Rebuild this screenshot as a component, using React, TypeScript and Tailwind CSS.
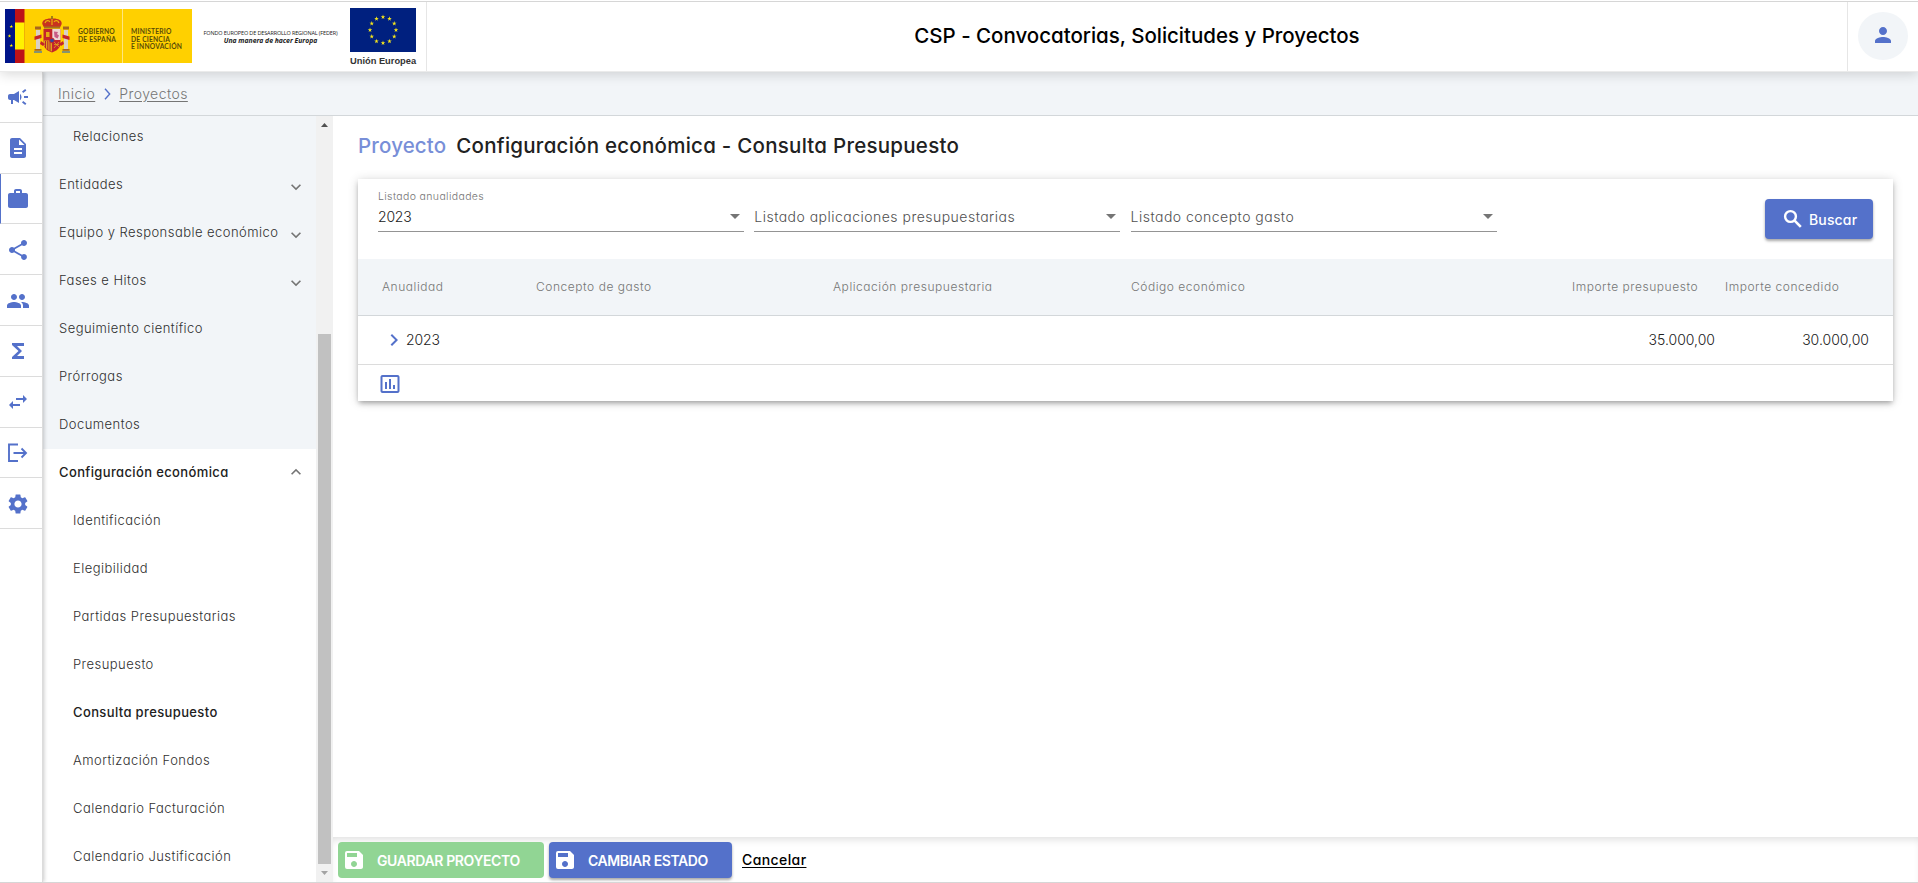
import React from 'react';
import {
  MdCampaign,
  MdDescription,
  MdWork,
  MdShare,
  MdPeople,
  MdFunctions,
  MdSwapHoriz,
  MdSettings,
  MdPerson,
  MdSave,
  MdInsertChartOutlined,
  MdExpandMore,
  MdExpandLess,
  MdChevronRight,
} from 'react-icons/md';

function ExitIcon() {
  return (
    <svg viewBox="0 0 24 24" width="24" height="24" fill="none" stroke="currentColor" strokeWidth="1.900">
      <path d="M12 3.500H3v16.500h9M7.500 12h12.500M15.500 7.500l4.500 4.500-4.500 4.500" />
    </svg>
  );
}

function SearchIcon() {
  return (
    <svg viewBox="0 0 24 24" width="24" height="24" fill="none" stroke="currentColor" className="mr-[4px]">
      <circle cx="9.500" cy="9.500" r="5.400" strokeWidth="2.400" />
      <path d="M13.600 13.600l6.200 6.200" strokeWidth="2.600" />
    </svg>
  );
}

const rail = [
  { id: 'conv', icon: <MdCampaign size={24} /> },
  { id: 'sol', icon: <MdDescription size={24} /> },
  { id: 'pro', icon: <MdWork size={24} />, active: true },
  { id: 'share', icon: <MdShare size={24} /> },
  { id: 'people', icon: <MdPeople size={24} /> },
  { id: 'sum', icon: <MdFunctions size={24} /> },
  { id: 'swap', icon: <MdSwapHoriz size={24} /> },
  { id: 'exit', icon: <ExitIcon /> },
  { id: 'conf', icon: <MdSettings size={24} /> },
];

type MenuItem = { label: string; child?: boolean; arrow?: 'down' | 'up'; bold?: boolean; white?: boolean };

const menu: MenuItem[] = [
  { label: 'Relaciones', child: true },
  { label: 'Entidades', arrow: 'down' },
  { label: 'Equipo y Responsable económico', arrow: 'down' },
  { label: 'Fases e Hitos', arrow: 'down' },
  { label: 'Seguimiento científico' },
  { label: 'Prórrogas' },
  { label: 'Documentos' },
  { label: 'Configuración económica', arrow: 'up', bold: true, white: true },
  { label: 'Identificación', child: true, white: true },
  { label: 'Elegibilidad', child: true, white: true },
  { label: 'Partidas Presupuestarias', child: true, white: true },
  { label: 'Presupuesto', child: true, white: true },
  { label: 'Consulta presupuesto', child: true, bold: true, white: true },
  { label: 'Amortización Fondos', child: true, white: true },
  { label: 'Calendario Facturación', child: true, white: true },
  { label: 'Calendario Justificación', child: true, white: true },
];

const STAR = '0,-1 0.224,-0.309 0.951,-0.309 0.363,0.118 0.588,0.809 0,0.382 -0.588,0.809 -0.363,0.118 -0.951,-0.309 -0.224,-0.309';

function EuFlag() {
  return (
    <svg viewBox="0 0 66 44" width="66" height="44">
      <rect width="66" height="44" fill="#00207f" />
      {Array.from({ length: 12 }, (_, i) => {
        const a = (i * Math.PI) / 6;
        return (
          <polygon
            key={i}
            points={STAR}
            fill="#f5e51b"
            transform={`translate(${33 + 13 * Math.sin(a)} ${22 - 13 * Math.cos(a)}) scale(2.4)`}
          />
        );
      })}
    </svg>
  );
}

function CoatOfArms() {
  return (
    <svg viewBox="0 0 38 38" width="38" height="38">
      <path d="M9.500 8.500C8 4 14 2 19 2.500c5-.5 11 1.500 9.500 6l-1.500 3H11z" fill="#c8321e" />
      <path d="M12 7c1-3 4-3 5-1M21 6c1-2 4-2 5 1M19 3v6" stroke="#e9b10c" strokeWidth="1.200" fill="none" />
      <path d="M18.200 0h1.600v3h-1.600z" fill="#8a6a1c" />
      <path d="M11 10.500h16v2H11z" fill="#a5711f" />
      <path d="M10.500 13h17v14c0 5-4 8-8.500 9.500C14.500 35 10.500 32 10.500 27z" fill="#c4242b" />
      <path d="M19.300 13h8.200v11h-8.200z" fill="#eed6d4" />
      <path d="M21 15.500l4 .5-1 2 2 1.500-1.500 3-3-1.500z" fill="#c75b86" />
      <path d="M13 16h3.500v5H13z" fill="#e6ac13" />
      <path d="M10.500 24.500h8.500v11c-4.500-1.500-8.500-4-8.500-9z" fill="#e0a21d" />
      <path d="M12.500 25v7M14.800 25v9M17 25v10" stroke="#b8242b" strokeWidth="1" />
      <path d="M21 26l5 5M26 26l-5 6M21 28.500h5" stroke="#e0a21d" strokeWidth=".8" />
      <circle cx="19" cy="24.500" r="2.300" fill="#34479c" stroke="#c4242b" />
      <path d="M3 14h4v20H3zM31 14h4v20h-4z" fill="#d9d0c4" />
      <path d="M2 10.500h6v3H2zM30 10.500h6v3h-6z" fill="#a8661f" />
      <path d="M1.500 20.500l7-2v3.500l-7 2zM36.500 20.500l-7-2v3.500l7 2zM8 25l4 3-2 2-3-2zM30 25l-4 3 2 2 3-2z" fill="#c4242b" />
      <path d="M1.500 33h7v1.800h-7zM29.500 33h7v1.800h-7z" fill="#a8661f" />
      <path d="M1 36h8M29 36h8" stroke="#5f8095" strokeWidth="1.600" />
    </svg>
  );
}

function GovLogo() {
  return (
    <div className="flex h-[54px] w-[187px] bg-[#ffd000] font-['Lato',sans-serif] text-[6.700px] leading-[7.600px] font-bold tracking-[0.200px] text-[#5a4c08]">
      <svg viewBox="0 0 20 54" width="20" height="54" className="shrink-0">
        <rect width="10" height="54" fill="#001489" />
        <rect x="10" width="9.500" height="54" fill="#bd1218" />
        <rect x="10" y="13.500" width="9.500" height="27" fill="#fff200" />
        <polygon points={STAR} fill="#fff200" transform="translate(6.3 17.5) scale(1.9)" />
        <polygon points={STAR} fill="#fff200" transform="translate(4.500 27) scale(1.9)" />
        <polygon points={STAR} fill="#fff200" transform="translate(6.3 36.500) scale(1.9)" />
      </svg>
      <div className="ml-[8px] mt-[7px] w-[38px] shrink-0">
        <CoatOfArms />
      </div>
      <div className="ml-[7px] mt-[19px] w-[44px] shrink-0 whitespace-nowrap">
        GOBIERNO
        <br />
        DE ESPAÑA
      </div>
      <div className="h-full w-px shrink-0 bg-[#ffe680]" />
      <div className="ml-[8px] mt-[19px] whitespace-nowrap">
        MINISTERIO
        <br />
        DE CIENCIA
        <br />
        E INNOVACIÓN
      </div>
    </div>
  );
}

function SelectField({ label, value, placeholder }: { label?: string; value?: string; placeholder?: string }) {
  return (
    <div className="flex h-[53px] w-[366px] flex-col border-b border-[#949494]">
      <div className="mt-[10px] h-[16px] text-[10.500px] leading-[16px] tracking-[0.370px] text-[#757575]">{label}</div>
      <div className="flex h-[23px] items-center justify-between pr-[4px]">
        <span
          className={
            value ? 'text-[14px] tracking-[-0.200px] text-[#212121]' : 'text-[14px] tracking-[0.480px] text-[#4f4f4f]'
          }
        >
          {value ?? placeholder}
        </span>
        <svg width="10" height="5" viewBox="0 0 10 5">
          <path d="M0 0h10L5 5z" fill="#757575" />
        </svg>
      </div>
    </div>
  );
}

export default function App() {
  return (
    <div className="flex h-[883px] w-[1918px] flex-col overflow-hidden border-b border-[#d6d6d6] bg-white font-['Inter',sans-serif] font-light text-[#212121] [font-feature-settings:'cv11']">
      <header className="relative z-20 flex h-[72px] shrink-0 border-b border-[#ebebeb] bg-white shadow-[0_2px_12px_rgba(0,0,0,0.16)]">
        <div className="mt-px flex w-full border-t border-[#d6d6d6]">
          <div className="flex w-[427px] border-r border-[#e6e6e6] pl-[5px] pt-[6px]">
            <div className="mt-px">
              <GovLogo />
            </div>
            <div className="ml-[11px] mt-[21px] w-[135px] whitespace-nowrap text-center font-['Open_Sans',sans-serif] text-[#222]">
              <div className="text-[5.500px] leading-[8px] font-normal tracking-[-0.140px]">
                FONDO EUROPEO DE DESARROLLO REGIONAL (FEDER)
              </div>
              <div className="text-[6.800px] leading-[8.500px] font-bold italic">Una manera de hacer Europa</div>
            </div>
            <div className="ml-[12px] flex w-[66px] flex-col">
              <EuFlag />
              <div className="mt-[4px] whitespace-nowrap text-center font-['Liberation_Sans',sans-serif] text-[9.300px] leading-[11px] font-bold text-[#333]">
                Unión Europea
              </div>
            </div>
          </div>
          <h1 className="flex flex-1 items-center justify-center pb-px text-[20.500px] font-medium tracking-[-0.020px] text-black">
            CSP - Convocatorias, Solicitudes y Proyectos
          </h1>
          <div className="flex w-[71px] items-start border-l border-[#e6e6e6] pl-[10px] pt-[10px]">
            <div className="flex h-[48px] w-[50px] items-center justify-center rounded-[50%] bg-[#f2f5f8] pb-[2px] text-[#5471ca]">
              <MdPerson size={24} />
            </div>
          </div>
        </div>
      </header>

      <div className="flex min-h-0 flex-1">
        <nav className="relative z-10 w-[43px] shrink-0 border-r border-[#dcdcdc] bg-white shadow-[1px_0_4px_rgba(0,0,0,0.22)]">
          {rail.map((r) => (
            <div
              key={r.id}
              className={
                'flex h-[50.800px] items-center border-b border-b-[#dcdcdc] pt-px text-[#5471ca] ' +
                (r.active ? 'border-l border-l-[#5471ca] pl-[5px]' : 'pl-[6px]')
              }
            >
              {r.icon}
            </div>
          ))}
        </nav>

        <div className="flex min-w-0 flex-1 flex-col">
          <div className="flex h-[44px] shrink-0 items-center border-b border-[#d3d7da] bg-[#f2f5f8] pl-[15px] text-[14px] tracking-[0.440px] text-[#757575]">
            <a className="underline underline-offset-2">Inicio</a>
            <svg width="7" height="12" viewBox="0 0 7 12" fill="none" className="ml-[9px] mr-[8px] text-[#5471ca]">
              <path d="M1 .8l4.700 5.200L1 11.200" stroke="currentColor" strokeWidth="1.400" />
            </svg>
            <a className="underline underline-offset-2">Proyectos</a>
          </div>

          <div className="flex min-h-0 flex-1">
            <aside className="w-[273px] shrink-0 overflow-hidden">
              <div className="-mt-[3px]">
                {menu.map((m) => (
                  <div
                    key={m.label}
                    className={
                      'flex h-[48px] items-center justify-between whitespace-nowrap pr-[8px] text-[13px] ' +
                      (m.child ? 'pl-[30px] ' : 'pl-[16px] ') +
                      (m.white ? 'bg-white ' : 'bg-[#f2f5f8] ') +
                      (m.bold
                        ? 'font-medium tracking-[0.370px] text-[#212121]'
                        : 'tracking-[0.460px] text-[#303030]')
                    }
                  >
                    <span>{m.label}</span>
                    {m.arrow === 'down' && <MdExpandMore size={20} className="mt-[4px] mr-[2px] text-[#757575]" />}
                    {m.arrow === 'up' && <MdExpandLess size={20} className="mb-[2px] mr-[2px] text-[#757575]" />}
                  </div>
                ))}
              </div>
            </aside>
            <div className="flex w-[17px] shrink-0 flex-col items-center bg-[#f1f1f1]">
              <div className="flex h-[17px] items-center justify-center">
                <svg width="7" height="4" viewBox="0 0 7 4">
                  <path d="M0 4h7L3.500 0z" fill="#505050" />
                </svg>
              </div>
              <div className="mt-[201px] h-[530px] w-[13px] bg-[#c1c1c1]" />
              <div className="flex h-[17px] items-center justify-center">
                <svg width="7" height="4" viewBox="0 0 7 4">
                  <path d="M0 0h7L3.500 4z" fill="#a3a3a3" />
                </svg>
              </div>
            </div>

            <div className="flex min-w-0 flex-1 flex-col">
              <main className="min-h-0 flex-1 pl-[25px] pr-[25px]">
                <h2 className="flex h-[63px] items-center gap-[10px] whitespace-nowrap pb-[2px] text-[20.500px] font-medium">
                  <span className="tracking-[0.150px] text-[#788fd8]">Proyecto</span>
                  <span className="tracking-[0.250px]">Configuración económica - Consulta Presupuesto</span>
                </h2>
                <section className="h-[222px] bg-white shadow-[0_3px_5px_-1px_rgba(0,0,0,0.3),0_1px_10px_rgba(0,0,0,0.16)]">
                  <div className="flex h-[80px] justify-between pl-[20px] pr-[20px]">
                    <div className="flex gap-[10.300px]">
                      <SelectField label="Listado anualidades" value="2023" />
                      <SelectField placeholder="Listado aplicaciones presupuestarias" />
                      <SelectField placeholder="Listado concepto gasto" />
                    </div>
                    <button className="mt-[20px] flex h-[40px] w-[108px] items-center rounded-[4px] bg-[#5471ca] pl-[16px] text-[14px] font-medium tracking-[0.150px] text-white shadow-[0_2px_3px_rgba(0,0,0,0.35)]">
                      <SearchIcon />
                      Buscar
                    </button>
                  </div>
                  <div className="flex h-[57px] items-center whitespace-nowrap border-b border-[#d3d7da] bg-[#f2f5f8] text-[12px] tracking-[0.540px] text-[#757575]">
                    <span className="ml-[24px] w-[154px]">Anualidad</span>
                    <span className="w-[297px]">Concepto de gasto</span>
                    <span className="w-[298px]">Aplicación presupuestaria</span>
                    <span className="w-[441px]">Código económico</span>
                    <span className="w-[153px]">Importe presupuesto</span>
                    <span>Importe concedido</span>
                  </div>
                  <div className="flex h-[49px] items-center border-b border-[#dcdcdc] pb-px text-[14px]">
                    <MdChevronRight size={24} className="ml-[24px] text-[#5471ca]" />
                    <span className="tracking-[-0.150px]">2023</span>
                    <span className="ml-auto">35.000,00</span>
                    <span className="w-[178px] pr-[24px] text-right">30.000,00</span>
                  </div>
                  <div className="flex h-[36px] items-center pl-[20px] pt-px text-[#5471ca]">
                    <MdInsertChartOutlined size={24} />
                  </div>
                </section>
              </main>
              <footer className="flex h-[45px] shrink-0 items-start pl-[5px] pt-[5px] text-[14px] font-semibold shadow-[inset_0_6px_8px_-4px_rgba(0,0,0,0.14)]">
                <button className="flex h-[36px] w-[206px] items-center whitespace-nowrap rounded-[4px] bg-[#91d594] pl-[4px] tracking-[-0.380px] text-white">
                  <MdSave size={24} className="mr-[11px]" />
                  GUARDAR PROYECTO
                </button>
                <button className="ml-[5px] flex h-[36px] w-[183px] items-center whitespace-nowrap rounded-[4px] bg-[#5471ca] pl-[4px] tracking-[-0.420px] text-white shadow-[0_2px_3px_rgba(0,0,0,0.35)]">
                  <MdSave size={24} className="mr-[11px]" />
                  CAMBIAR ESTADO
                </button>
                <a className="ml-[10px] flex h-[36px] items-center pb-px font-medium tracking-[0.400px] text-black underline underline-offset-2">
                  Cancelar
                </a>
              </footer>
            </div>
          </div>
        </div>
      </div>
    </div>
  );
}
